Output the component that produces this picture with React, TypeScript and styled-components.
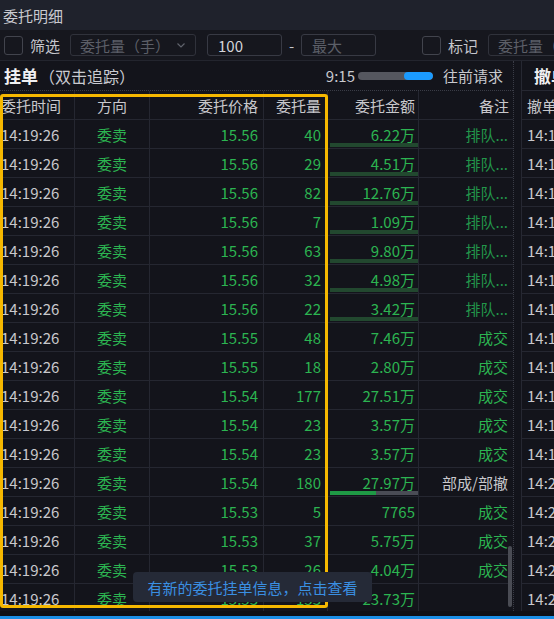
import React from "react";
import styled, { createGlobalStyle } from "styled-components";

const Global = createGlobalStyle`
  html, body { margin: 0; padding: 0; background: #13141b; }
  * { box-sizing: border-box; }
  body { font-family: "Noto Sans CJK SC", "Noto Sans", sans-serif; }
`;

const Page = styled.div`
  position: relative;
  width: 554px;
  height: 619px;
  overflow: hidden;
  background: #13141b;
  display: flex;
  flex-direction: column;
  color: #c8c8c8;
  font-size: 15px;
`;

const TitleBar = styled.div`
  height: 30px;
  flex: none;
  background: #1f222c;
  display: flex;
  align-items: center;
  padding-left: 3px;
  color: #c9cad0;
  font-size: 15px;
`;

const FilterBar = styled.div`
  height: 30px;
  flex: none;
  background: #16171e;
  display: flex;
  align-items: center;
  padding-left: 4px;
  white-space: nowrap;
  overflow: hidden;
  & > * { flex: none; }
`;

const Gap = styled.span<{ $w: number }>`
  width: ${(p) => p.$w}px;
  flex: none;
`;

const Check = styled.span`
  width: 19px;
  height: 19px;
  border: 1px solid #42444d;
  border-radius: 3px;
  margin-right: 7px;
`;

const Label = styled.span<{ $mr: number }>`
  color: #c5c6cc;
  font-size: 15px;
  margin-right: ${(p) => p.$mr}px;
`;

const SelectBox = styled.div<{ $w: number }>`
  width: ${(p) => p.$w}px;
  height: 22px;
  border: 1px solid #30323b;
  border-radius: 3px;
  display: flex;
  align-items: center;
  justify-content: space-between;
  padding: 0 8px 0 9px;
  color: #5c5f68;
  font-size: 15px;
  overflow: hidden;
`;

const Input = styled.div<{ $w: number; $ph?: boolean }>`
  width: ${(p) => p.$w}px;
  height: 22px;
  border: 1px solid #383a44;
  border-radius: 3px;
  display: flex;
  align-items: center;
  padding-left: 10px;
  color: ${(p) => (p.$ph ? "#5c5f68" : "#d4d5da")};
  font-size: 15px;
`;

const Dash = styled.span`
  width: 19px;
  text-align: center;
  color: #c5c6cc;
`;

const Main = styled.div`
  flex: 1;
  display: flex;
  min-height: 0;
  border-top: 1px solid #23252e;
`;

const LeftPanel = styled.div`
  position: relative;
  width: 514px;
  flex: none;
  display: flex;
  flex-direction: column;
  border-right: 1px dotted #3a3c46;
  overflow: hidden;
`;

const RightPanel = styled.div`
  flex: 1;
  margin-left: 7px;
  border-left: 1px solid #262832;
  display: flex;
  flex-direction: column;
  overflow: hidden;
`;

const SectionHeader = styled.div`
  height: 29px;
  flex: none;
  display: flex;
  align-items: center;
  padding-left: 4px;
  padding-right: 10px;
  white-space: nowrap;
`;

const SectionTitle = styled.span`
  font-size: 17px;
  font-weight: 700;
  color: #f0f0f2;
`;

const SectionSub = styled.span`
  font-size: 16px;
  color: #c9cad0;
  margin-left: 1px;
`;

const Spacer = styled.div`
  flex: 1;
`;

const Clock = styled.span`
  font-size: 15px;
  color: #c8c9ce;
  margin-right: 3px;
`;

const Progress = styled.div`
  width: 75px;
  height: 8px;
  border-radius: 4px;
  background: #55575f;
  display: flex;
  justify-content: flex-end;
  overflow: hidden;
  margin-right: 10px;
`;

const ProgressFill = styled.div`
  height: 100%;
  border-radius: 4px;
  background: #1b9bff;
`;

const LinkText = styled.span`
  font-size: 15px;
  color: #c8c9ce;
`;

const Table = styled.div`
  flex: 1;
  display: flex;
  flex-direction: column;
  border-top: 1px dotted #3a3c46;
  overflow: hidden;
`;

const Row = styled.div`
  display: grid;
  grid-template-columns: 75px 75px 114px 64px 91px 1fr;
  height: 29px;
  flex: none;
  border-bottom: 1px solid #252731;
`;

const Cell = styled.div<{
  $align: "left" | "center" | "right";
  $pr?: number;
  $color?: string;
  $last?: boolean;
}>`
  position: relative;
  display: flex;
  align-items: center;
  justify-content: ${(p) =>
    p.$align === "left" ? "flex-start" : p.$align === "center" ? "center" : "flex-end"};
  padding-right: ${(p) => p.$pr ?? 0}px;
  padding-left: ${(p) => (p.$align === "left" ? 1 : 0)}px;
  border-right: ${(p) => (p.$last ? "none" : "1px solid #252731")};
  color: ${(p) => p.$color ?? "#c8c8cc"};
  font-size: 15px;
  white-space: nowrap;
  overflow: hidden;
`;

const AmountBar = styled.div`
  position: absolute;
  left: 2px;
  right: 0;
  bottom: 1px;
  height: 4px;
  display: flex;
`;

const BarPart = styled.div<{ $c: string }>`
  height: 100%;
  background: ${(p) => p.$c};
`;

const RCell = styled.div`
  height: 29px;
  flex: none;
  border-bottom: 1px solid #252731;
  display: flex;
  align-items: center;
  padding-left: 5px;
  white-space: nowrap;
  color: #c8c8cc;
  font-size: 15px;
`;

const RTitle = styled.div`
  height: 29px;
  flex: none;
  display: flex;
  align-items: center;
  padding-left: 12px;
  white-space: nowrap;
  font-size: 17px;
  font-weight: 700;
  color: #f0f0f2;
`;

const RTable = styled.div`
  flex: 1;
  display: flex;
  flex-direction: column;
  overflow: hidden;
  border-top: 1px solid #262832;
`;

const ScrollThumb = styled.div`
  position: absolute;
  right: 1px;
  top: 485px;
  width: 4px;
  height: 61px;
  border-radius: 2px;
  background: #4a4c54;
`;

const Footer = styled.div`
  height: 8px;
  flex: none;
  background: #0f1015;
  border-bottom: 3px solid #1b8fe6;
`;

const Highlight = styled.div`
  position: absolute;
  left: 0;
  top: 94px;
  width: 328px;
  height: 514px;
  border: 3px solid #f6b800;
  border-radius: 3px;
  pointer-events: none;
`;

const Toast = styled.div`
  position: absolute;
  left: 133px;
  top: 572px;
  width: 239px;
  height: 30px;
  border-radius: 4px;
  background: #252a37;
  color: #3a8fe2;
  font-size: 15px;
  display: flex;
  align-items: center;
  justify-content: center;
`;

const GREEN = "#2cb451";
const GREEN_DIM = "#22964a";

type R = {
  price: string;
  qty: string;
  amt: string;
  note: string;
  bar?: "queued" | "partial";
};

const rows: R[] = [
  { price: "15.56", qty: "40", amt: "6.22万", note: "排队...", bar: "queued" },
  { price: "15.56", qty: "29", amt: "4.51万", note: "排队...", bar: "queued" },
  { price: "15.56", qty: "82", amt: "12.76万", note: "排队...", bar: "queued" },
  { price: "15.56", qty: "7", amt: "1.09万", note: "排队...", bar: "queued" },
  { price: "15.56", qty: "63", amt: "9.80万", note: "排队...", bar: "queued" },
  { price: "15.56", qty: "32", amt: "4.98万", note: "排队...", bar: "queued" },
  { price: "15.56", qty: "22", amt: "3.42万", note: "排队...", bar: "queued" },
  { price: "15.55", qty: "48", amt: "7.46万", note: "成交" },
  { price: "15.55", qty: "18", amt: "2.80万", note: "成交" },
  { price: "15.54", qty: "177", amt: "27.51万", note: "成交" },
  { price: "15.54", qty: "23", amt: "3.57万", note: "成交" },
  { price: "15.54", qty: "23", amt: "3.57万", note: "成交" },
  { price: "15.54", qty: "180", amt: "27.97万", note: "部成/部撤", bar: "partial" },
  { price: "15.53", qty: "5", amt: "7765", note: "成交" },
  { price: "15.53", qty: "37", amt: "5.75万", note: "成交" },
  { price: "15.53", qty: "26", amt: "4.04万", note: "成交" },
  { price: "15.53", qty: "153", amt: "23.73万", note: "" },
];

const rightTimes = [
  "14:19:58", "14:19:58", "14:19:58", "14:19:59", "14:19:59", "14:19:59",
  "14:19:59", "14:19:59", "14:19:59", "14:19:59", "14:19:59", "14:19:59",
  "14:20:01", "14:20:01", "14:20:02", "14:20:02", "14:20:03",
];

function Chevron() {
  return (
    <svg width="12" height="12" viewBox="0 0 12 12" fill="none">
      <path d="M2.5 4.5 L6 8 L9.5 4.5" stroke="#5f626b" strokeWidth="1.2" />
    </svg>
  );
}

export default function App() {
  return (
    <>
      <Global />
      <Page>
        <TitleBar>委托明细</TitleBar>
        <FilterBar>
          <Check />
          <Label $mr={10}>筛选</Label>
          <SelectBox $w={126}>
            <span>委托量（手）</span>
            <Chevron />
          </SelectBox>
          <Gap $w={11} />
          <Input $w={75}>100</Input>
          <Dash>-</Dash>
          <Input $w={75} $ph>最大</Input>
          <Gap $w={46} />
          <Check />
          <Label $mr={10}>标记</Label>
          <SelectBox $w={126}>
            <span>委托量（手）</span>
            <Chevron />
          </SelectBox>
        </FilterBar>
        <Main>
          <LeftPanel>
            <SectionHeader>
              <SectionTitle>挂单</SectionTitle>
              <SectionSub>（双击追踪）</SectionSub>
              <Spacer />
              <Clock>9:15</Clock>
              <Progress>
                <ProgressFill style={{ width: "38%" }} />
              </Progress>
              <LinkText>往前请求</LinkText>
            </SectionHeader>
            <Table>
              <Row>
                <Cell $align="left">委托时间</Cell>
                <Cell $align="center">方向</Cell>
                <Cell $align="right" $pr={5}>委托价格</Cell>
                <Cell $align="right" $pr={6}>委托量</Cell>
                <Cell $align="right" $pr={3}>委托金额</Cell>
                <Cell $align="right" $pr={4} $last>备注</Cell>
              </Row>
              {rows.map((r, i) => (
                <Row key={i}>
                  <Cell $align="left">14:19:26</Cell>
                  <Cell $align="center" $color={GREEN}>委卖</Cell>
                  <Cell $align="right" $pr={5} $color={GREEN}>{r.price}</Cell>
                  <Cell $align="right" $pr={6} $color={GREEN}>{r.qty}</Cell>
                  <Cell $align="right" $pr={3} $color={GREEN}>
                    {r.amt}
                    {r.bar === "queued" && (
                      <AmountBar>
                        <BarPart $c="#22482f" style={{ width: "100%" }} />
                      </AmountBar>
                    )}
                    {r.bar === "partial" && (
                      <AmountBar>
                        <BarPart $c="#1f9a45" style={{ width: "52%" }} />
                        <BarPart $c="#4a4c55" style={{ width: "48%" }} />
                      </AmountBar>
                    )}
                  </Cell>
                  <Cell
                    $align="right"
                    $pr={5}
                    $last
                    $color={
                      r.note === "部成/部撤" ? "#c8c8cc" : r.note === "排队..." ? GREEN_DIM : GREEN
                    }
                  >
                    {r.note}
                  </Cell>
                </Row>
              ))}
            </Table>
            <ScrollThumb />
          </LeftPanel>
          <RightPanel>
            <RTitle>撤单</RTitle>
            <RTable>
              <RCell>撤单时间</RCell>
              {rightTimes.map((t, i) => (
                <RCell key={i}>{t}</RCell>
              ))}
            </RTable>
          </RightPanel>
        </Main>
        <Footer />
        <Highlight />
        <Toast>有新的委托挂单信息，点击查看</Toast>
      </Page>
    </>
  );
}
